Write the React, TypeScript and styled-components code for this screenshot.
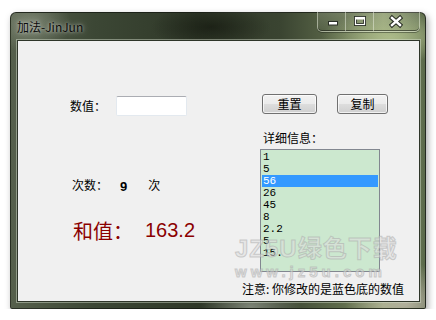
import styled, { createGlobalStyle } from "styled-components";

const GlobalStyle = createGlobalStyle`
    html, body {
        margin: 0;
        padding: 0;
        background: #ffffff;
    }
    body {
        font-family: "Liberation Sans", "Noto Sans CJK SC", sans-serif;
        font-size: 12px;
        color: #000;
    }
`;

const entries = ["1", "5", "56", "26", "45", "8", "2.2", "5", "15."];
const selectedIndex = 2;

const App = () => {
    return (
        <>
            <GlobalStyle />
            <Stage>
                <Window>
                    <TitleBar>
                        <Title>加法-JinJun</Title>
                        <CaptionButtons>
                            <CaptionButton $width={27}>
                                <svg width="27" height="19" viewBox="0 0 27 19">
                                    <rect x="10.5" y="9.5" width="9" height="3.5" fill="#fff" stroke="#2a2f26" strokeWidth="1" />
                                </svg>
                            </CaptionButton>
                            <CaptionButton $width={27}>
                                <svg width="27" height="19" viewBox="0 0 27 19">
                                    <rect x="9.5" y="5.5" width="9" height="7" fill="none" stroke="#2a2f26" strokeWidth="3" />
                                    <rect x="9.5" y="5.5" width="9" height="7" fill="none" stroke="#fff" strokeWidth="1.2" />
                                    <rect x="9.5" y="5.5" width="9" height="2" fill="#fff" />
                                </svg>
                            </CaptionButton>
                            <CaptionButton $width={45} $last>
                                <svg width="45" height="19" viewBox="0 0 45 19">
                                    <path d="M18 6 L26 13 M26 6 L18 13" stroke="#2a2f26" strokeWidth="4.5" strokeLinecap="square" />
                                    <path d="M18 6 L26 13 M26 6 L18 13" stroke="#fff" strokeWidth="2.4" strokeLinecap="square" />
                                </svg>
                            </CaptionButton>
                        </CaptionButtons>
                    </TitleBar>
                    <Client>
                        <LeftColumn>
                            <InputRow>
                                <Label>数值：</Label>
                                <TextBox />
                            </InputRow>
                            <CountRow>
                                <Label>次数：</Label>
                                <CountValue>9</CountValue>
                                <Label>次</Label>
                            </CountRow>
                            <SumRow>
                                <span>和值：</span>
                                <span>163.2</span>
                            </SumRow>
                        </LeftColumn>
                        <RightColumn>
                            <ButtonRow>
                                <PushButton $width={55}>重置</PushButton>
                                <PushButton $width={51}>复制</PushButton>
                            </ButtonRow>
                            <DetailLabel>详细信息：</DetailLabel>
                            <ListBox>
                                {entries.map((entry, index) => (
                                    <ListItem key={index} $selected={index === selectedIndex}>
                                        {entry}
                                    </ListItem>
                                ))}
                            </ListBox>
                            <Note>注意: 你修改的是蓝色底的数值</Note>
                        </RightColumn>
                        <Watermark>
                            <WatermarkTitle>JZ5U绿色下载</WatermarkTitle>
                            <WatermarkUrl>www.jz5u.com</WatermarkUrl>
                        </Watermark>
                    </Client>
                </Window>
            </Stage>
        </>
    );
};

export default App;

// Styled Components
const Stage = styled.div`
    padding: 12px 0 0 10px;
`;

const Window = styled.div`
    box-sizing: border-box;
    width: 416px;
    height: 297px;
    display: flex;
    flex-direction: column;
    padding: 0 5px 6px 6px;
    border-radius: 6px 6px 2px 2px;
    border: 1px solid rgba(20, 24, 18, 0.75);
    background:
        radial-gradient(ellipse 60px 40px at 395px 290px, rgba(230, 215, 210, 0.55), transparent),
        radial-gradient(ellipse 50px 30px at 240px 294px, rgba(210, 215, 205, 0.45), transparent),
        radial-gradient(ellipse 70px 26px at 380px 24px, rgba(175, 190, 140, 0.9), transparent),
        radial-gradient(ellipse 60px 22px at 200px 14px, rgba(20, 24, 15, 0.7), transparent),
        radial-gradient(ellipse 40px 30px at 20px 10px, rgba(150, 158, 140, 0.6), transparent),
        linear-gradient(90deg, #56604c 0%, #3c4735 20%, #2f3828 45%, #3a4431 65%, #5f6c4c 80%, #8e9c70 90%, #5b6a4a 100%);
    box-shadow: 2px 3px 7px rgba(0, 0, 0, 0.35);
`;

const TitleBar = styled.div`
    height: 27px;
    display: flex;
    justify-content: space-between;
    align-items: flex-start;
`;

const Title = styled.div`
    margin-top: 6px;
    font-family: "Noto Sans CJK SC", sans-serif;
    font-size: 12px;
    line-height: 16px;
    color: #0c0c0c;
    text-shadow: 0 0 6px rgba(255, 255, 255, 0.55), 0 0 3px rgba(255, 255, 255, 0.5);
`;

const CaptionButtons = styled.div`
    display: flex;
    height: 19px;
    margin-top: -1px;
    border: 1px solid rgba(235, 240, 225, 0.55);
    border-top: none;
    border-radius: 0 0 5px 5px;
    box-shadow: inset 0 -1px 0 rgba(20, 24, 18, 0.6), 0 1px 0 rgba(20, 24, 18, 0.4);
    overflow: hidden;
`;

const CaptionButton = styled.div<{ $width: number; $last?: boolean }>`
    width: ${({ $width }) => $width}px;
    height: 19px;
    border-right: ${({ $last }) => ($last ? "none" : "1px solid rgba(235, 240, 225, 0.5)")};
    background: linear-gradient(180deg, rgba(255, 255, 255, 0.12), rgba(255, 255, 255, 0.02));
    svg {
        display: block;
    }
`;

const Client = styled.div`
    position: relative;
    flex: 1;
    display: grid;
    grid-template-columns: 224px 1fr;
    background: #f0f0f0;
    border: 1px solid #2e3529;
    box-shadow: 0 0 0 1px rgba(220, 228, 210, 0.45);
`;

const LeftColumn = styled.div`
    display: flex;
    flex-direction: column;
    padding: 55px 0 0 52px;
`;

const InputRow = styled.div`
    display: flex;
    align-items: center;
    gap: 10px;
    height: 20px;
`;

const Label = styled.span`
    font-family: "Noto Sans CJK SC", sans-serif;
    font-size: 12px;
    line-height: 16px;
`;

const TextBox = styled.div`
    box-sizing: border-box;
    width: 71px;
    height: 20px;
    background: #fff;
    border: 1px solid #e3e9ef;
    border-top-color: #abadb3;
    border-radius: 2px;
`;

const CountRow = styled.div`
    display: flex;
    align-items: center;
    height: 20px;
    margin: 59px 0 0 2px;

    & > :nth-child(2) {
        margin: 0 21px 0 12px;
    }
`;

const CountValue = styled.span`
    font-family: "Liberation Sans", sans-serif;
    font-weight: bold;
    font-size: 13px;
    line-height: 16px;
    padding-top: 3px;
`;

const SumRow = styled.div`
    display: flex;
    align-items: center;
    gap: 12px;
    height: 28px;
    margin: 21px 0 0 3px;
    font-family: "Liberation Sans", "Noto Sans CJK SC", sans-serif;
    font-size: 20px;
    color: #8b0000;
`;

const RightColumn = styled.div`
    display: flex;
    flex-direction: column;
    align-items: flex-start;
    padding-top: 53px;
`;

const ButtonRow = styled.div`
    display: flex;
    gap: 20px;
    margin-left: 20px;
`;

const PushButton = styled.div<{ $width: number }>`
    box-sizing: border-box;
    width: ${({ $width }) => $width}px;
    height: 20px;
    display: flex;
    align-items: center;
    justify-content: center;
    border: 1px solid #707070;
    border-radius: 3px;
    background: linear-gradient(180deg, #f2f2f2 0%, #ebebeb 48%, #dddddd 52%, #cfcfcf 100%);
    box-shadow: inset 0 0 0 1px rgba(255, 255, 255, 0.7);
    font-family: "Noto Sans CJK SC", sans-serif;
    font-size: 12px;
    line-height: 16px;
`;

const DetailLabel = styled.div`
    margin: 16px 0 0 21px;
    font-family: "Noto Sans CJK SC", sans-serif;
    font-size: 12px;
    line-height: 16px;
`;

const ListBox = styled.div`
    box-sizing: border-box;
    width: 120px;
    height: 123px;
    margin: 3px 0 0 18px;
    padding: 1px;
    background: #cce8cf;
    border: 1px solid #828790;
`;

const ListItem = styled.div<{ $selected: boolean }>`
    height: 12px;
    padding-left: 1px;
    font-family: "Liberation Mono", monospace;
    font-size: 11px;
    line-height: 12px;
    color: ${({ $selected }) => ($selected ? "#ffffff" : "#000000")};
    background: ${({ $selected }) => ($selected ? "#3399ff" : "transparent")};
`;

const Note = styled.div`
    margin-top: 9px;
    font-family: "Noto Sans CJK SC", sans-serif;
    font-size: 12px;
    line-height: 16px;
`;

const Watermark = styled.div`
    position: absolute;
    left: 217px;
    top: 193px;
    pointer-events: none;
    font-family: "Liberation Sans", "Noto Sans CJK SC", sans-serif;
    font-weight: bold;
    color: rgba(222, 222, 222, 0.55);
    -webkit-text-stroke: 1px rgba(165, 165, 165, 0.5);
`;

const WatermarkTitle = styled.div`
    font-size: 24px;
    line-height: 30px;
    letter-spacing: 1px;
`;

const WatermarkUrl = styled.div`
    font-size: 15px;
    line-height: 16px;
    letter-spacing: 4px;
`;
